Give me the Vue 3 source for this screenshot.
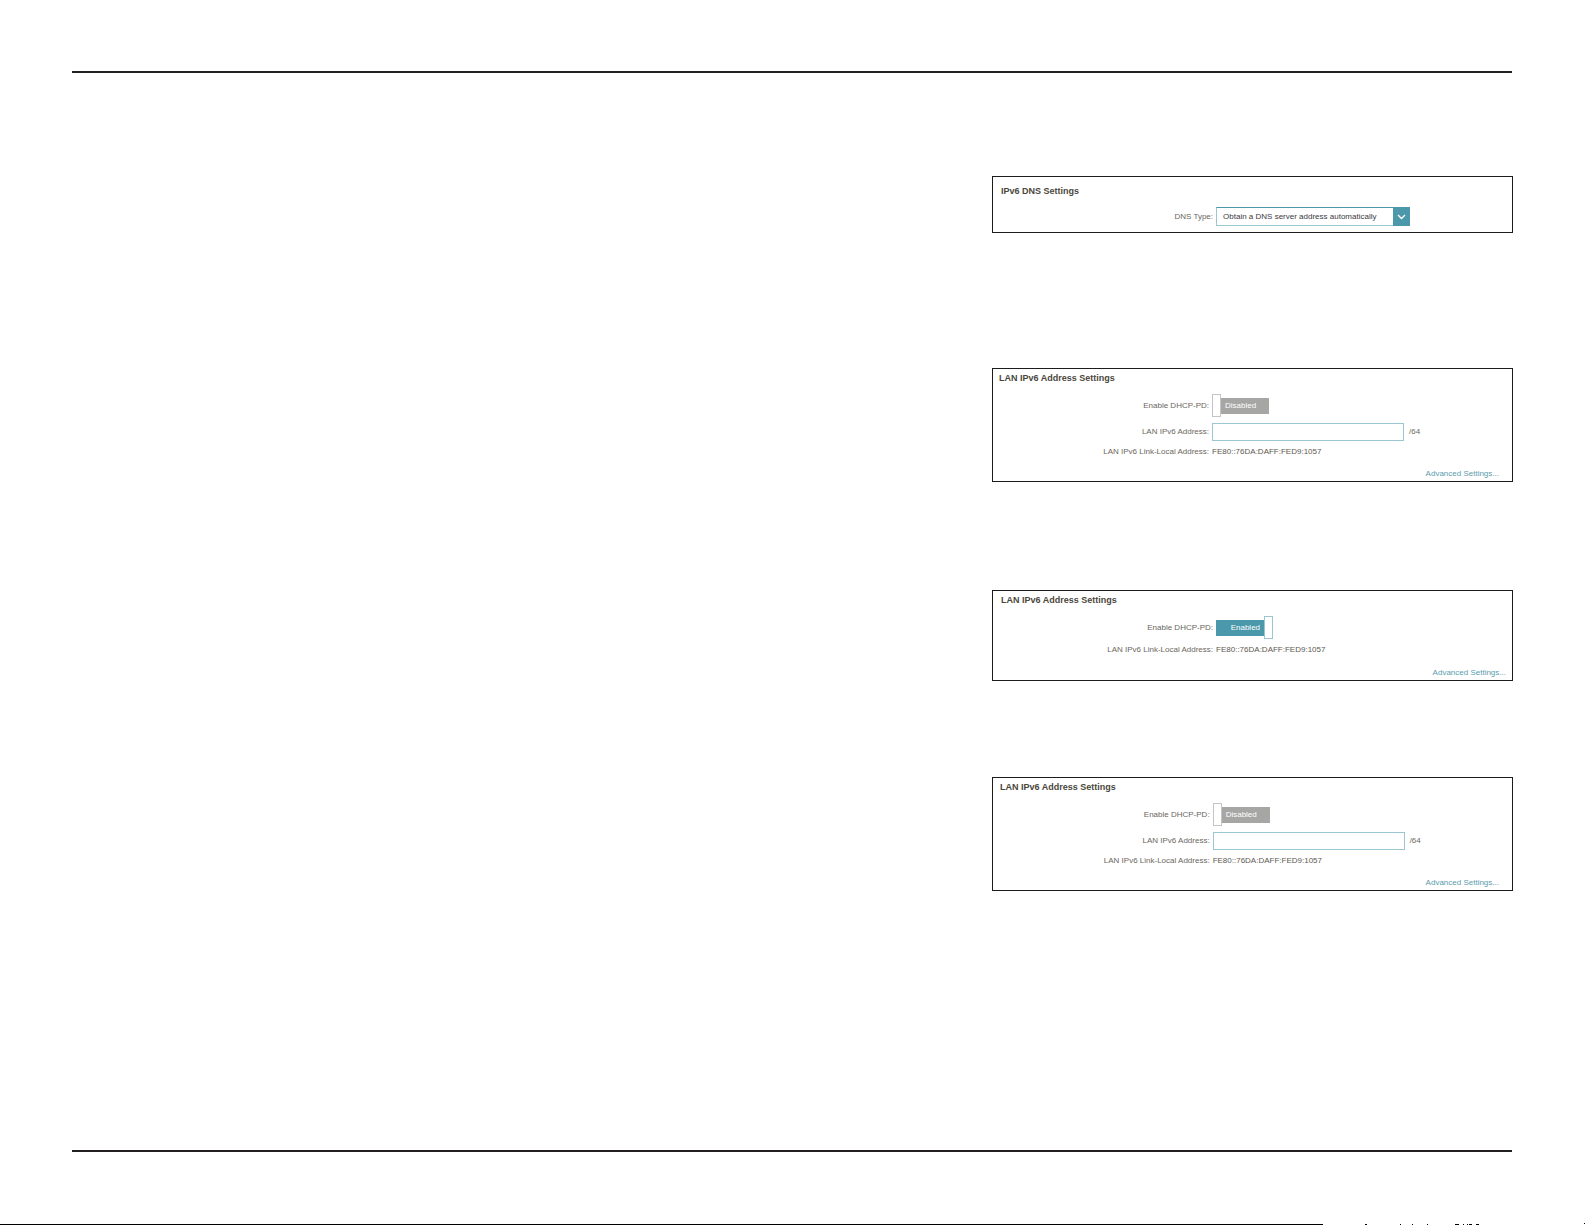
<script setup>
import { reactive, ref } from 'vue'

const dnsType = ref('auto')

const lanPanels = reactive([
  { id: 'static', variant: 'after-dns', enabled: false, address: '' },
  { id: 'delegated', variant: 'shifted', enabled: true, address: '' },
  { id: 'manual', variant: 'last', enabled: false, address: '' },
])

const linkLocal = 'FE80::76DA:DAFF:FED9:1057'
</script>

<template>
  <div class="page">
    <hr class="rule rule-top" />

    <main class="panels">
      <section class="panel dns">
        <h2>IPv6 DNS Settings</h2>
        <div class="row">
          <label class="name" for="dns-type">DNS Type:</label>
          <div class="select">
            <select id="dns-type" v-model="dnsType">
              <option value="auto">Obtain a DNS server address automatically</option>
              <option value="manual">Use the following DNS address</option>
            </select>
            <svg class="chevron" viewBox="0 0 17 19" aria-hidden="true">
              <path d="M5 8l3.5 3.5L12 8" fill="none" stroke="#fff" stroke-width="1.3" />
            </svg>
          </div>
        </div>
      </section>

      <section v-for="panel in lanPanels" :key="panel.id" class="panel lan" :class="panel.variant">
        <h2>LAN IPv6 Address Settings</h2>
        <div class="rows">
          <div class="row">
            <label class="name" :for="`pd-${panel.id}`">Enable DHCP-PD:</label>
            <div class="toggle" :class="{ on: panel.enabled }">
              <input :id="`pd-${panel.id}`" v-model="panel.enabled" type="checkbox" role="switch" />
              <span>{{ panel.enabled ? 'Enabled' : 'Disabled' }}</span>
            </div>
          </div>
          <div v-if="!panel.enabled" class="row">
            <label class="name" :for="`address-${panel.id}`">LAN IPv6 Address:</label>
            <div class="field">
              <input :id="`address-${panel.id}`" v-model="panel.address" type="text" />
              <span>/64</span>
            </div>
          </div>
          <div class="row">
            <span class="name">LAN IPv6 Link-Local Address:</span>
            <span class="value">{{ linkLocal }}</span>
          </div>
        </div>
        <a class="advanced" href="#advanced">Advanced Settings...</a>
      </section>
    </main>

    <hr class="rule rule-bottom" />

    <footer class="edge">
      <div class="edge-line"></div>
      <svg class="edge-marks" viewBox="0 0 262 2" preserveAspectRatio="none" aria-hidden="true">
        <path
          d="M42 1h2v1h-2zM77 1h1v1h-1zM89 1h1v1h-1zM104 1h1v1h-1zM132 1h4v1h-4zM140 1h1v1h-1zM144 1h1v1h-1zM146 1h3v1h-3zM153 1h3v1h-3zM261 0h1v1h-1z"
        />
      </svg>
    </footer>
  </div>
</template>

<style>
body {
  margin: 0;
  background: #fff;
}
</style>

<style scoped>
.page {
  box-sizing: border-box;
  min-height: 100vh;
  display: flex;
  flex-direction: column;
  padding-top: 71px;
  font-family: "Liberation Sans", Arial, sans-serif;
  font-size: 8px;
  line-height: 10px;
  color: #6b6760;
}

.rule {
  width: auto;
  height: 2px;
  margin: 0 73px 0 72px;
  border: 0;
  background: #231f20;
}

.rule-bottom {
  margin-top: auto;
}

.panels {
  display: flex;
  flex-direction: column;
  align-items: flex-end;
  margin: 103px 72px 96px;
}

.panel {
  box-sizing: border-box;
  width: 36.15%;
  min-width: 420px;
  display: flex;
  flex-direction: column;
  border: 1px solid #1c1c1c;
}

.panel h2 {
  margin: 0;
  font-size: 9px;
  line-height: 12px;
  font-weight: 700;
  color: #4b473c;
}

.dns {
  padding: 8px 8px 6px;
  gap: 10px;
}

.lan {
  padding: 3px 13px 2px 6px;
  gap: 10px;
}

.after-dns {
  margin-top: 135px;
}

.shifted {
  margin-top: 108px;
  padding: 3px 6px 2px 8px;
}

.last {
  margin-top: 96px;
  padding-left: 7px;
}

.rows {
  display: flex;
  flex-direction: column;
  gap: 6px;
}

.row {
  display: grid;
  grid-template-columns: 210fr 287fr;
  column-gap: 3px;
  align-items: center;
}

.dns .row {
  grid-template-columns: 212fr 288fr;
}

.shifted .row {
  grid-template-columns: 212fr 290fr;
}

.name {
  text-align: right;
  white-space: nowrap;
}

.value {
  color: #5d5950;
}

.select {
  position: relative;
  width: 194px;
  height: 19px;
}

.select select {
  box-sizing: border-box;
  width: 100%;
  height: 100%;
  padding: 0 20px 0 6px;
  appearance: none;
  border: 1px solid #9ac7d1;
  border-top-color: #4c98ab;
  border-radius: 0;
  background: #fff;
  font: inherit;
  color: #3b3a40;
}

.chevron {
  position: absolute;
  top: 0;
  right: 0;
  width: 17px;
  height: 19px;
  background: #4c98ab;
  pointer-events: none;
}

.toggle {
  display: flex;
  align-items: center;
  width: 57px;
  height: 23px;
}

.toggle.on {
  flex-direction: row-reverse;
}

.toggle input {
  box-sizing: border-box;
  width: 9px;
  height: 23px;
  margin: 0;
  appearance: none;
  border: 1px solid #c4c4c4;
  background: #fff;
}

.toggle.on input {
  border-color: #9ac7d1;
}

.toggle span {
  box-sizing: border-box;
  flex: 1;
  padding-left: 4px;
  line-height: 16px;
  background: #a6a6a4;
  color: #fff;
}

.toggle.on span {
  padding: 0 4px 0 0;
  text-align: right;
  background: #4c98ab;
}

.field {
  display: flex;
  align-items: center;
  gap: 5px;
}

.field input {
  box-sizing: border-box;
  width: 192px;
  height: 18px;
  padding: 0 6px;
  border: 1px solid #9ac7d1;
  border-radius: 0;
  background: #fff;
  font: inherit;
}

.advanced {
  align-self: flex-end;
  margin-top: 2px;
  color: #5b9cad;
  text-decoration: none;
}

.shifted .advanced {
  margin-top: 3px;
}

.edge {
  display: flex;
  align-items: flex-end;
  height: 2px;
  margin-top: 71px;
}

.edge-line {
  width: 83.47%;
  height: 1px;
  background: #000;
}

.edge-marks {
  flex: 1;
  height: 2px;
}
</style>
